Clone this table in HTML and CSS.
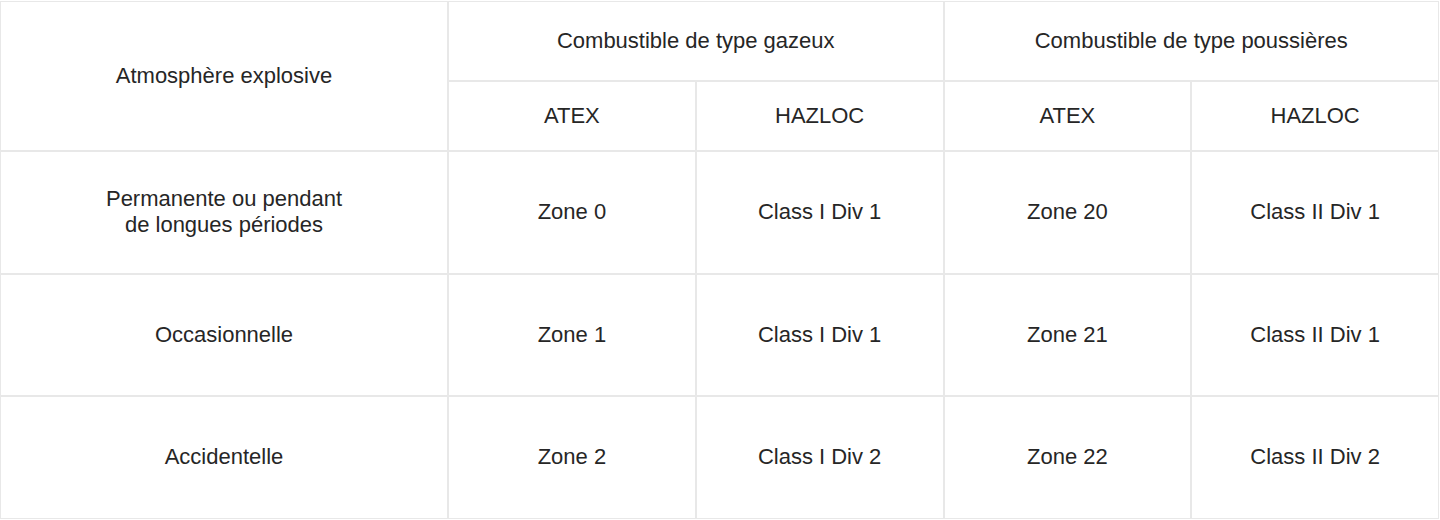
FILE: index.html
```html
<!DOCTYPE html>
<html lang="fr">
<head>
<meta charset="utf-8">
<title>Atmosphère explosive</title>
<link rel="stylesheet" href="styles.css">
</head>
<body>
<table class="zones">
  <colgroup>
    <col class="c-first">
    <col class="c-std">
    <col class="c-std">
    <col class="c-std">
    <col class="c-std">
  </colgroup>
  <thead>
    <tr class="r-head1">
      <th rowspan="2">Atmosphère explosive</th>
      <th colspan="2">Combustible de type gazeux</th>
      <th colspan="2">Combustible de type poussières</th>
    </tr>
    <tr class="r-head2">
      <th>ATEX</th>
      <th>HAZLOC</th>
      <th>ATEX</th>
      <th>HAZLOC</th>
    </tr>
  </thead>
  <tbody>
    <tr class="r-body">
      <td>Permanente ou pendant<br>de longues périodes</td>
      <td>Zone 0</td>
      <td>Class I Div 1</td>
      <td>Zone 20</td>
      <td>Class II Div 1</td>
    </tr>
    <tr class="r-body">
      <td>Occasionnelle</td>
      <td>Zone 1</td>
      <td>Class I Div 1</td>
      <td>Zone 21</td>
      <td>Class II Div 1</td>
    </tr>
    <tr class="r-body">
      <td>Accidentelle</td>
      <td>Zone 2</td>
      <td>Class I Div 2</td>
      <td>Zone 22</td>
      <td>Class II Div 2</td>
    </tr>
  </tbody>
</table>
</body>
</html>
```

FILE: styles.css
```css
html, body {
  margin: 0;
  padding: 0;
  background: #ffffff;
}

body {
  padding-top: 1px;
  font-family: "Liberation Sans", Arial, Helvetica, sans-serif;
  color: #262626;
}

.zones {
  width: 1439px;
  border-collapse: separate;
  border-spacing: 0;
  table-layout: fixed;
}

.c-first { width: 448px; }
.c-std { width: 247.75px; }

.zones th,
.zones td {
  border: 1px solid #e8e8e8;
  padding: 0 10px;
  text-align: center;
  vertical-align: middle;
  font-size: 22px;
  font-weight: normal;
  line-height: 26px;
}

.r-head1 > * { height: 78px; }
.r-head2 > * { height: 68px; }
.r-body > * { height: 120.5px; }
```
